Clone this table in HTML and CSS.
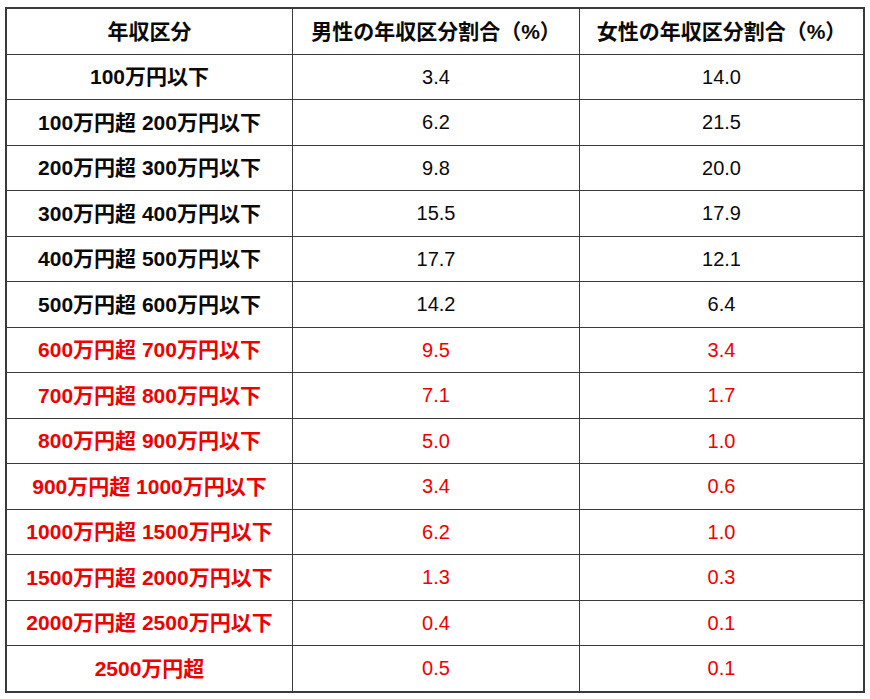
FILE: index.html
```html
<!DOCTYPE html>
<html lang="ja">
<head>
<meta charset="utf-8">
<link rel="stylesheet" href="styles.css">
</head>
<body>
<table class="income">
<thead>
<tr><th>年収区分</th><th>男性の年収区分割合（%）</th><th>女性の年収区分割合（%）</th></tr>
</thead>
<tbody>
<tr><th>100万円以下</th><td>3.4</td><td>14.0</td></tr>
<tr><th>100万円超 200万円以下</th><td>6.2</td><td>21.5</td></tr>
<tr><th>200万円超 300万円以下</th><td>9.8</td><td>20.0</td></tr>
<tr><th>300万円超 400万円以下</th><td>15.5</td><td>17.9</td></tr>
<tr><th>400万円超 500万円以下</th><td>17.7</td><td>12.1</td></tr>
<tr><th>500万円超 600万円以下</th><td>14.2</td><td>6.4</td></tr>
<tr class="hi"><th>600万円超 700万円以下</th><td>9.5</td><td>3.4</td></tr>
<tr class="hi"><th>700万円超 800万円以下</th><td>7.1</td><td>1.7</td></tr>
<tr class="hi"><th>800万円超 900万円以下</th><td>5.0</td><td>1.0</td></tr>
<tr class="hi"><th>900万円超 1000万円以下</th><td>3.4</td><td>0.6</td></tr>
<tr class="hi"><th>1000万円超 1500万円以下</th><td>6.2</td><td>1.0</td></tr>
<tr class="hi"><th>1500万円超 2000万円以下</th><td>1.3</td><td>0.3</td></tr>
<tr class="hi"><th>2000万円超 2500万円以下</th><td>0.4</td><td>0.1</td></tr>
<tr class="hi"><th>2500万円超</th><td>0.5</td><td>0.1</td></tr>
</tbody>
</table>
</body>
</html>
```
FILE: styles.css
```css
html, body {
  margin: 0;
  padding: 0;
  background: #ffffff;
}
body {
  padding: 7px 0 0 5px;
  font-family: "Liberation Sans", "Noto Sans CJK JP", sans-serif;
  color: #0a0a0a;
}
.income {
  border-collapse: collapse;
  width: 860px;
  table-layout: fixed;
  border: 2px solid #3a3a3a;
}
.income th, .income td {
  border: 1px solid #3a3a3a;
  height: 44.5px;
  padding: 0;
  text-align: center;
  vertical-align: middle;
  font-size: 20px;
  line-height: 1;
}
.income th {
  font-weight: bold;
  font-size: 21px;
}
.income td {
  font-weight: normal;
}
.income th:nth-child(1) { width: 285px; }
.income th:nth-child(2) { width: 286px; }
.income tr.hi th, .income tr.hi td {
  color: #ee0000;
}
```
